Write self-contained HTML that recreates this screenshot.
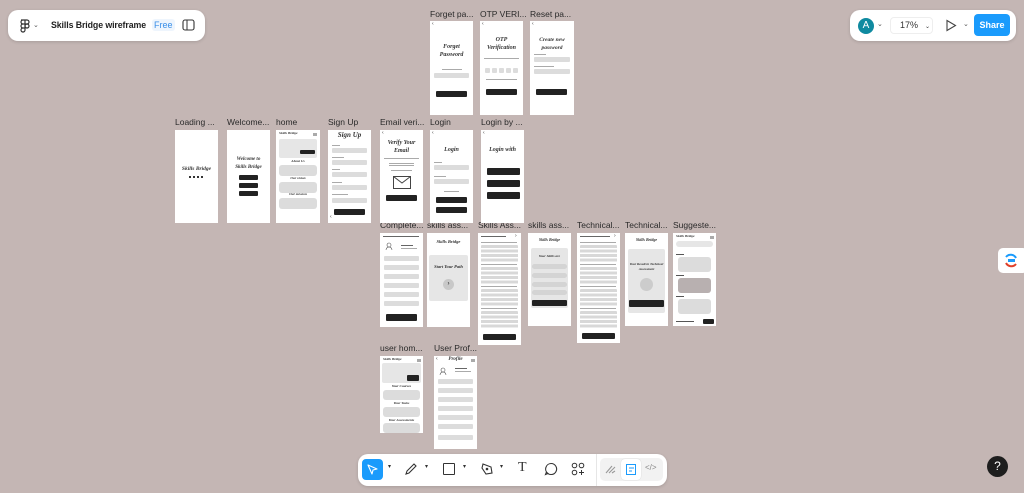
<!DOCTYPE html>
<html><head><meta charset="utf-8"><style>
*{margin:0;padding:0;box-sizing:border-box}
body{width:1024px;height:493px;overflow:hidden;background:#c4b6b4;font-family:"Liberation Sans",sans-serif;position:relative}
.a{position:absolute}
.lab{position:absolute;font-size:8.5px;color:#2a2a2a;white-space:nowrap}
.f{position:absolute;background:#fff;overflow:hidden}
.f>*{position:absolute}
.g{background:#dcdcdc;border-radius:1px}
.gb{background:#e6e6e6;border-radius:2px}
.d{background:#222;border-radius:1px}
.s{font-family:"Liberation Serif",serif;font-style:italic;font-weight:bold;color:#333;white-space:nowrap;text-align:center;left:0;right:0}
.t{height:1px;background:#aaa}
.bk{font-size:5px;color:#333;left:2px;top:0}
.panel{background:#fff;border-radius:10px;box-shadow:0 1px 3px rgba(0,0,0,.15)}
</style></head><body>

<!-- top-left panel -->
<div class="a panel" style="left:8px;top:10px;width:197px;height:31px"></div>
<svg class="a" style="left:19px;top:19px" width="12" height="14" viewBox="0 0 12 14"><g fill="none" stroke="#333" stroke-width="1.2"><path d="M2 1h4v4H4a2 2 0 0 1 0-4zM6 1h2a2 2 0 0 1 0 4H6zM6 5v4H4a2 2 0 0 1 0-4zM6 9v2a2 2 0 1 1-2-2z"/><circle cx="8" cy="7" r="2"/></g></svg>
<div class="a" style="left:33px;top:21px;font-size:7px;color:#555">⌄</div>
<div class="a" style="left:51px;top:20px;font-size:8.8px;font-weight:bold;color:#222;letter-spacing:-0.1px;white-space:nowrap">Skills Bridge wireframe</div>
<div class="a" style="left:152px;top:19px;font-size:9px;color:#3a8fe8;background:#eef5fd;padding:1px 2px;border-radius:3px">Free</div>
<svg class="a" style="left:182px;top:19px" width="13" height="12"><rect x="1" y="1" width="11" height="10" rx="2" fill="none" stroke="#333" stroke-width="1.1"/><line x1="5" y1="1" x2="5" y2="11" stroke="#333"/></svg>

<!-- top-right panel -->
<div class="a panel" style="left:850px;top:10px;width:166px;height:31px"></div>
<div class="a" style="left:858px;top:18px;width:16px;height:16px;border-radius:50%;background:#0f8aa0;color:#fff;font-size:10px;text-align:center;line-height:16px">A</div>
<div class="a" style="left:877px;top:20px;font-size:7px;color:#555">⌄</div>
<div class="a" style="left:890px;top:17px;width:43px;height:17px;border:1px solid #eee;border-radius:4px;font-size:9px;color:#333;line-height:15px;padding-left:9px">17%<span style="font-size:6px;margin-left:7px">⌄</span></div>
<svg class="a" style="left:945px;top:19px" width="12" height="13"><path d="M2 1.5L10.5 6.5L2 11.5Z" fill="none" stroke="#444" stroke-width="1.1"/></svg>
<div class="a" style="left:963px;top:20px;font-size:7px;color:#555">⌄</div>
<div class="a" style="left:974px;top:14px;width:36px;height:22px;background:#1a9bfc;border-radius:4px;color:#fff;font-size:9px;font-weight:bold;text-align:center;line-height:22px">Share</div>

<!-- labels -->
<div class="lab" style="left:430px;top:9px">Forget pa...</div>
<div class="lab" style="left:480px;top:9px">OTP VERI...</div>
<div class="lab" style="left:530px;top:9px">Reset pa...</div>
<div class="lab" style="left:175px;top:117px">Loading ...</div>
<div class="lab" style="left:227px;top:117px">Welcome...</div>
<div class="lab" style="left:276px;top:117px">home</div>
<div class="lab" style="left:328px;top:117px">Sign Up</div>
<div class="lab" style="left:380px;top:117px">Email veri...</div>
<div class="lab" style="left:430px;top:117px">Login</div>
<div class="lab" style="left:481px;top:117px">Login by ...</div>
<div class="lab" style="left:380px;top:220px">Complete...</div>
<div class="lab" style="left:427px;top:220px">skills ass...</div>
<div class="lab" style="left:478px;top:220px">Skills Ass...</div>
<div class="lab" style="left:528px;top:220px">skills ass...</div>
<div class="lab" style="left:577px;top:220px">Technical...</div>
<div class="lab" style="left:625px;top:220px">Technical...</div>
<div class="lab" style="left:673px;top:220px">Suggeste...</div>
<div class="lab" style="left:380px;top:343px">user hom...</div>
<div class="lab" style="left:434px;top:343px">User Prof...</div>

<!-- Forget -->
<div class="f" style="left:430px;top:21px;width:43px;height:94px">
<div class="bk">‹</div>
<div class="s" style="top:22px;font-size:6px;line-height:8px">Forget<br>Password</div>
<div class="t" style="left:12px;top:48px;width:20px"></div>
<div class="g" style="left:4px;top:52px;width:35px;height:5px"></div>
<div class="d" style="left:6px;top:70px;width:31px;height:6px"></div>
</div>
<!-- OTP -->
<div class="f" style="left:480px;top:21px;width:43px;height:94px">
<div class="bk">‹</div>
<div class="s" style="top:15px;font-size:6px;line-height:8px">OTP<br>Verification</div>
<div class="t" style="left:4px;top:37px;width:35px"></div>
<div class="g" style="left:5px;top:47px;width:5px;height:5px"></div><div class="g" style="left:12px;top:47px;width:5px;height:5px"></div><div class="g" style="left:19px;top:47px;width:5px;height:5px"></div><div class="g" style="left:26px;top:47px;width:5px;height:5px"></div><div class="g" style="left:33px;top:47px;width:5px;height:5px"></div>
<div class="t" style="left:6px;top:58px;width:31px"></div>
<div class="d" style="left:6px;top:68px;width:31px;height:6px"></div>
</div>
<!-- Reset -->
<div class="f" style="left:530px;top:21px;width:44px;height:94px">
<div class="bk">‹</div>
<div class="s" style="top:15px;font-size:5.5px;line-height:8px">Create new<br>password</div>
<div class="t" style="left:4px;top:33px;width:12px"></div>
<div class="g" style="left:4px;top:36px;width:36px;height:5px"></div>
<div class="t" style="left:4px;top:45px;width:20px"></div>
<div class="g" style="left:4px;top:48px;width:36px;height:5px"></div>
<div class="d" style="left:6px;top:68px;width:31px;height:6px"></div>
</div>

<!-- Loading -->
<div class="f" style="left:175px;top:130px;width:43px;height:93px">
<div class="s" style="top:36px;font-size:5.5px">Skills Bridge</div>
<div style="left:14px;top:46px;width:14px;height:2px;background:repeating-linear-gradient(90deg,#333 0 2px,transparent 2px 4px)"></div>
</div>
<!-- Welcome -->
<div class="f" style="left:227px;top:130px;width:43px;height:93px">
<div class="s" style="top:26px;font-size:5px;line-height:8px">Welcome to<br>Skills Bridge</div>
<div class="d" style="left:12px;top:45px;width:19px;height:5px"></div>
<div class="d" style="left:12px;top:53px;width:19px;height:5px"></div>
<div class="d" style="left:12px;top:61px;width:19px;height:5px"></div>
</div>
<!-- home -->
<div class="f" style="left:276px;top:130px;width:44px;height:93px">
<div class="s" style="top:1px;font-size:3.5px;text-align:left;left:3px">Skills Bridge</div>
<div class="t" style="left:37px;top:3px;width:4px;height:3px;background:repeating-linear-gradient(#555 0 .6px,transparent .6px 1.3px)"></div>
<div class="gb" style="left:3px;top:9px;width:38px;height:19px"></div>
<div class="d" style="left:24px;top:20px;width:15px;height:4px"></div>
<div class="s" style="top:29px;font-size:3.5px">About Us</div>
<div class="g" style="left:3px;top:35px;width:38px;height:11px;border-radius:3px"></div>
<div class="s" style="top:46px;font-size:3.5px">Our vision</div>
<div class="g" style="left:3px;top:52px;width:38px;height:11px;border-radius:3px"></div>
<div class="s" style="top:62px;font-size:3.5px">Our mission</div>
<div class="g" style="left:3px;top:68px;width:38px;height:11px;border-radius:3px"></div>
</div>
<!-- Sign up -->
<div class="f" style="left:328px;top:130px;width:43px;height:93px">
<div class="s" style="top:1px;font-size:7px">Sign Up</div>
<div class="t" style="left:4px;top:15px;width:8px"></div><div class="g" style="left:4px;top:18px;width:35px;height:5px"></div>
<div class="t" style="left:4px;top:27px;width:12px"></div><div class="g" style="left:4px;top:30px;width:35px;height:5px"></div>
<div class="t" style="left:4px;top:39px;width:8px"></div><div class="g" style="left:4px;top:42px;width:35px;height:5px"></div>
<div class="t" style="left:4px;top:52px;width:10px"></div><div class="g" style="left:4px;top:55px;width:35px;height:5px"></div>
<div class="t" style="left:4px;top:64px;width:16px"></div><div class="g" style="left:4px;top:68px;width:35px;height:5px"></div>
<div class="d" style="left:6px;top:79px;width:31px;height:6px"></div>
<div class="bk" style="top:84px">‹</div>
</div>
<!-- Email -->
<div class="f" style="left:380px;top:130px;width:43px;height:93px">
<div class="bk">‹</div>
<div class="s" style="top:9px;font-size:6px;line-height:8px">Verify Your<br>Email</div>
<div class="t" style="left:4px;top:28px;width:35px"></div>
<div class="t" style="left:9px;top:33px;width:25px"></div><div class="t" style="left:9px;top:35px;width:25px"></div>
<div class="t" style="left:11px;top:40px;width:21px"></div>
<svg style="left:13px;top:46px" width="18" height="13"><rect x=".5" y=".5" width="17" height="12" fill="#fff" stroke="#444"/><path d="M.5 .5L9 7L17.5 .5" fill="none" stroke="#444"/></svg>
<div class="d" style="left:6px;top:65px;width:31px;height:6px"></div>
</div>
<!-- Login -->
<div class="f" style="left:430px;top:130px;width:43px;height:93px">
<div class="bk">‹</div>
<div class="s" style="top:17px;font-size:6px">Login</div>
<div class="t" style="left:4px;top:32px;width:8px"></div><div class="g" style="left:4px;top:35px;width:35px;height:5px"></div>
<div class="t" style="left:4px;top:46px;width:12px"></div><div class="g" style="left:4px;top:49px;width:35px;height:5px"></div>
<div class="t" style="left:14px;top:61px;width:15px"></div>
<div class="d" style="left:6px;top:67px;width:31px;height:6px"></div>
<div class="d" style="left:6px;top:77px;width:31px;height:6px"></div>
</div>
<!-- Login with -->
<div class="f" style="left:481px;top:130px;width:43px;height:93px">
<div class="bk">‹</div>
<div class="s" style="top:17px;font-size:6px">Login with</div>
<div class="d" style="left:6px;top:38px;width:33px;height:7px"></div>
<div class="d" style="left:6px;top:50px;width:33px;height:7px"></div>
<div class="d" style="left:6px;top:62px;width:33px;height:7px"></div>
</div>

<!-- Complete -->
<div class="f" style="left:380px;top:233px;width:43px;height:94px">
<div class="t" style="left:3px;top:3px;width:36px;background:#666"></div>
<svg style="left:5px;top:9px" width="8" height="9"><circle cx="4" cy="3" r="2" fill="none" stroke="#555" stroke-width=".6"/><path d="M1 8a3 3 0 0 1 6 0" fill="none" stroke="#555" stroke-width=".6"/></svg>
<div class="t" style="left:21px;top:12px;width:12px;background:#666"></div><div class="t" style="left:21px;top:15px;width:16px"></div>
<div class="g" style="left:4px;top:23px;width:35px;height:5px"></div>
<div class="g" style="left:4px;top:32px;width:35px;height:5px"></div>
<div class="g" style="left:4px;top:41px;width:35px;height:5px"></div>
<div class="g" style="left:4px;top:50px;width:35px;height:5px"></div>
<div class="g" style="left:4px;top:59px;width:35px;height:5px"></div>
<div class="g" style="left:4px;top:68px;width:35px;height:5px"></div>
<div class="d" style="left:6px;top:81px;width:31px;height:7px"></div>
</div>
<!-- skills ass 1 -->
<div class="f" style="left:427px;top:233px;width:43px;height:94px">
<div class="s" style="top:6px;font-size:4.5px">Skills Bridge</div>
<div class="gb" style="left:2px;top:22px;width:39px;height:46px"></div>
<div class="s" style="top:31px;font-size:4.5px">Start Your Path</div>
<div style="left:16px;top:46px;width:11px;height:11px;border-radius:50%;background:#c8c8c8;font-size:6px;text-align:center;line-height:11px;color:#222">›</div>
</div>
<!-- Skills Assessment -->
<div class="f" style="left:478px;top:233px;width:43px;height:112px">
<div class="t" style="left:3px;top:3px;width:25px;background:#666"></div><div class="bk" style="left:37px">›</div>
<div class="t" style="left:3px;top:9px;width:36px"></div>
<div class="g" style="left:3px;top:12px;width:37px;height:18px;background:repeating-linear-gradient(#d8d8d8 0 3px,#fff 3px 4.5px)"></div>
<div class="t" style="left:3px;top:31px;width:36px"></div>
<div class="g" style="left:3px;top:34px;width:37px;height:18px;background:repeating-linear-gradient(#d8d8d8 0 3px,#fff 3px 4.5px)"></div>
<div class="t" style="left:3px;top:53px;width:36px"></div>
<div class="g" style="left:3px;top:56px;width:37px;height:18px;background:repeating-linear-gradient(#d8d8d8 0 3px,#fff 3px 4.5px)"></div>
<div class="t" style="left:3px;top:75px;width:36px"></div>
<div class="g" style="left:3px;top:78px;width:37px;height:18px;background:repeating-linear-gradient(#d8d8d8 0 3px,#fff 3px 4.5px)"></div>
<div class="d" style="left:5px;top:101px;width:33px;height:6px"></div>
</div>
<!-- skills ass 2 -->
<div class="f" style="left:528px;top:233px;width:43px;height:93px">
<div class="s" style="top:4px;font-size:4px">Skills Bridge</div>
<div class="gb" style="left:3px;top:15px;width:37px;height:60px"></div>
<div class="s" style="top:21px;font-size:3.5px">Your Skills are</div>
<div class="g" style="left:4px;top:31px;width:35px;height:5px;border-radius:3px;background:#d4d4d4"></div>
<div class="g" style="left:4px;top:40px;width:35px;height:5px;border-radius:3px;background:#d4d4d4"></div>
<div class="g" style="left:4px;top:49px;width:35px;height:5px;border-radius:3px;background:#d4d4d4"></div>
<div class="g" style="left:4px;top:57px;width:35px;height:5px;border-radius:3px;background:#d4d4d4"></div>
<div class="d" style="left:4px;top:67px;width:35px;height:6px"></div>
</div>
<!-- Technical 1 -->
<div class="f" style="left:577px;top:233px;width:43px;height:110px">
<div class="t" style="left:3px;top:3px;width:30px;background:#666"></div><div class="bk" style="left:37px">›</div>
<div class="t" style="left:3px;top:9px;width:36px"></div>
<div class="g" style="left:3px;top:12px;width:37px;height:18px;background:repeating-linear-gradient(#d8d8d8 0 3px,#fff 3px 4.5px)"></div>
<div class="t" style="left:3px;top:31px;width:36px"></div>
<div class="g" style="left:3px;top:34px;width:37px;height:18px;background:repeating-linear-gradient(#d8d8d8 0 3px,#fff 3px 4.5px)"></div>
<div class="t" style="left:3px;top:53px;width:36px"></div>
<div class="g" style="left:3px;top:56px;width:37px;height:18px;background:repeating-linear-gradient(#d8d8d8 0 3px,#fff 3px 4.5px)"></div>
<div class="t" style="left:3px;top:75px;width:36px"></div>
<div class="g" style="left:3px;top:78px;width:37px;height:18px;background:repeating-linear-gradient(#d8d8d8 0 3px,#fff 3px 4.5px)"></div>
<div class="d" style="left:5px;top:100px;width:33px;height:6px"></div>
</div>
<!-- Technical 2 -->
<div class="f" style="left:625px;top:233px;width:43px;height:93px">
<div class="s" style="top:4px;font-size:4px">Skills Bridge</div>
<div class="gb" style="left:3px;top:16px;width:37px;height:64px"></div>
<div class="s" style="top:29px;font-size:3.3px;line-height:5px">Your Result in Technical<br>Assessment</div>
<div style="left:15px;top:45px;width:13px;height:13px;border-radius:50%;background:#ccc"></div>
<div class="d" style="left:4px;top:67px;width:35px;height:7px"></div>
</div>
<!-- Suggested -->
<div class="f" style="left:673px;top:233px;width:43px;height:93px">
<div class="s" style="top:1px;font-size:3.5px;text-align:left;left:3px">Skills Bridge</div>
<div class="t" style="left:37px;top:3px;width:4px;height:3px;background:repeating-linear-gradient(#555 0 .6px,transparent .6px 1.3px)"></div>
<div class="gb" style="left:3px;top:8px;width:37px;height:6px;border-radius:3px"></div>
<div class="t" style="left:3px;top:21px;width:8px;background:#555"></div>
<div class="g" style="left:5px;top:24px;width:33px;height:15px;border-radius:3px"></div>
<div class="t" style="left:3px;top:42px;width:8px;background:#555"></div>
<div class="g" style="left:5px;top:45px;width:33px;height:15px;border-radius:3px;background:#b8b0b0"></div>
<div class="t" style="left:3px;top:63px;width:8px;background:#555"></div>
<div class="g" style="left:5px;top:66px;width:33px;height:15px;border-radius:3px"></div>
<div class="t" style="left:3px;top:88px;width:18px;background:#555"></div>
<div class="d" style="left:30px;top:86px;width:11px;height:5px"></div>
</div>

<!-- user home -->
<div class="f" style="left:380px;top:356px;width:43px;height:77px">
<div class="s" style="top:1px;font-size:3.5px;text-align:left;left:3px">Skills Bridge</div>
<div class="t" style="left:37px;top:3px;width:4px;height:3px;background:repeating-linear-gradient(#555 0 .6px,transparent .6px 1.3px)"></div>
<div class="gb" style="left:2px;top:7px;width:39px;height:20px"></div>
<div class="d" style="left:27px;top:19px;width:12px;height:6px"></div>
<div class="s" style="top:28px;font-size:3.5px">Your Courses</div>
<div class="g" style="left:3px;top:34px;width:37px;height:10px;border-radius:3px"></div>
<div class="s" style="top:45px;font-size:3.5px">Your Tasks</div>
<div class="g" style="left:3px;top:51px;width:37px;height:10px;border-radius:3px"></div>
<div class="s" style="top:62px;font-size:3.5px">Your Assessments</div>
<div class="g" style="left:3px;top:67px;width:37px;height:10px;border-radius:3px"></div>
</div>
<!-- profile -->
<div class="f" style="left:434px;top:356px;width:43px;height:93px">
<div class="bk">‹</div>
<div class="s" style="top:1px;font-size:5px">Profile</div>
<div class="t" style="left:37px;top:3px;width:4px;height:3px;background:repeating-linear-gradient(#555 0 .6px,transparent .6px 1.3px)"></div>
<svg style="left:5px;top:11px" width="8" height="9"><circle cx="4" cy="3" r="2" fill="none" stroke="#555" stroke-width=".6"/><path d="M1 8a3 3 0 0 1 6 0" fill="none" stroke="#555" stroke-width=".6"/></svg>
<div class="t" style="left:21px;top:12px;width:12px;background:#666"></div><div class="t" style="left:21px;top:15px;width:16px"></div>
<div class="g" style="left:4px;top:23px;width:35px;height:5px"></div>
<div class="g" style="left:4px;top:32px;width:35px;height:5px"></div>
<div class="g" style="left:4px;top:41px;width:35px;height:5px"></div>
<div class="g" style="left:4px;top:50px;width:35px;height:5px"></div>
<div class="g" style="left:4px;top:59px;width:35px;height:5px"></div>
<div class="g" style="left:4px;top:68px;width:35px;height:5px"></div>
<div class="g" style="left:4px;top:79px;width:35px;height:5px"></div>
</div>

<!-- right widget -->
<div class="a" style="left:998px;top:248px;width:30px;height:25px;background:#fff;border-radius:5px"></div>
<svg class="a" style="left:1003px;top:252px" width="16" height="17"><path d="M13 6A6 6 0 0 0 3 5" fill="none" stroke="#1a9bfc" stroke-width="2"/><path d="M3 11a6 6 0 0 0 10 1" fill="none" stroke="#e0402a" stroke-width="2"/><rect x="5" y="7" width="7" height="3" fill="#1a9bfc"/></svg>
<div class="a" style="left:987px;top:456px;width:21px;height:21px;border-radius:50%;background:#1e1e1e;color:#fff;font-size:12px;text-align:center;line-height:21px">?</div>

<!-- bottom toolbar -->
<div class="a panel" style="left:358px;top:454px;width:309px;height:32px"></div>
<div class="a" style="left:362px;top:459px;width:21px;height:21px;background:#1a9bfc;border-radius:4px"></div>
<svg class="a" style="left:366px;top:463px" width="13" height="13"><path d="M2 2L11 6L7 7L6 11Z" fill="none" stroke="#fff" stroke-width="1.1" stroke-linejoin="round"/></svg>
<div class="a" style="left:388px;top:463px;font-size:6px;color:#333">▾</div>
<svg class="a" style="left:404px;top:462px" width="13" height="14"><path d="M2 12L3 9L10 2L12 4L5 11Z" fill="none" stroke="#333" stroke-width="1.1"/></svg>
<div class="a" style="left:425px;top:463px;font-size:6px;color:#333">▾</div>
<div class="a" style="left:443px;top:463px;width:12px;height:12px;border:1.2px solid #333;border-radius:1px"></div>
<div class="a" style="left:463px;top:463px;font-size:6px;color:#333">▾</div>
<svg class="a" style="left:480px;top:462px" width="14" height="14"><path d="M3 2L11 5L12 11L6 12L2 6Z" fill="none" stroke="#333" stroke-width="1.1"/><circle cx="7" cy="7" r="1.3" fill="#333"/></svg>
<div class="a" style="left:500px;top:463px;font-size:6px;color:#333">▾</div>
<div class="a" style="left:518px;top:460px;font-size:14px;color:#333;font-family:'Liberation Serif',serif">T</div>
<svg class="a" style="left:544px;top:462px" width="14" height="14"><path d="M7 1.5a5.5 5.5 0 1 1-4.5 8.5L1.5 12.5L4 11.5A5.5 5.5 0 0 1 7 1.5Z" fill="none" stroke="#333" stroke-width="1.1"/></svg>
<svg class="a" style="left:571px;top:462px" width="14" height="14"><circle cx="3.5" cy="3.5" r="2.3" fill="none" stroke="#333"/><circle cx="10.5" cy="3.5" r="2.3" fill="none" stroke="#333"/><circle cx="3.5" cy="10.5" r="2.3" fill="none" stroke="#333"/><path d="M10.5 8v5M8 10.5h5" stroke="#333"/></svg>
<div class="a" style="left:596px;top:454px;width:1px;height:32px;background:#e6e6e6"></div>
<div class="a" style="left:600px;top:458px;width:63px;height:23px;background:#f2f2f2;border-radius:5px"></div>
<div class="a" style="left:621px;top:459px;width:20px;height:21px;background:#fff;border-radius:4px;box-shadow:0 0 1px rgba(0,0,0,.2)"></div>
<svg class="a" style="left:604px;top:463px" width="13" height="12"><path d="M2 10L8 3M5 10L11 4M8 10l3-2" stroke="#999" stroke-width="1.1" fill="none"/></svg>
<svg class="a" style="left:625px;top:463px" width="13" height="13"><rect x="1.5" y="1.5" width="9" height="10" fill="none" stroke="#1a9bfc"/><path d="M4 5h5M4 8h3" stroke="#1a9bfc"/></svg>
<div class="a" style="left:645px;top:463px;font-size:8px;color:#888">&lt;/&gt;</div>
</body></html>
